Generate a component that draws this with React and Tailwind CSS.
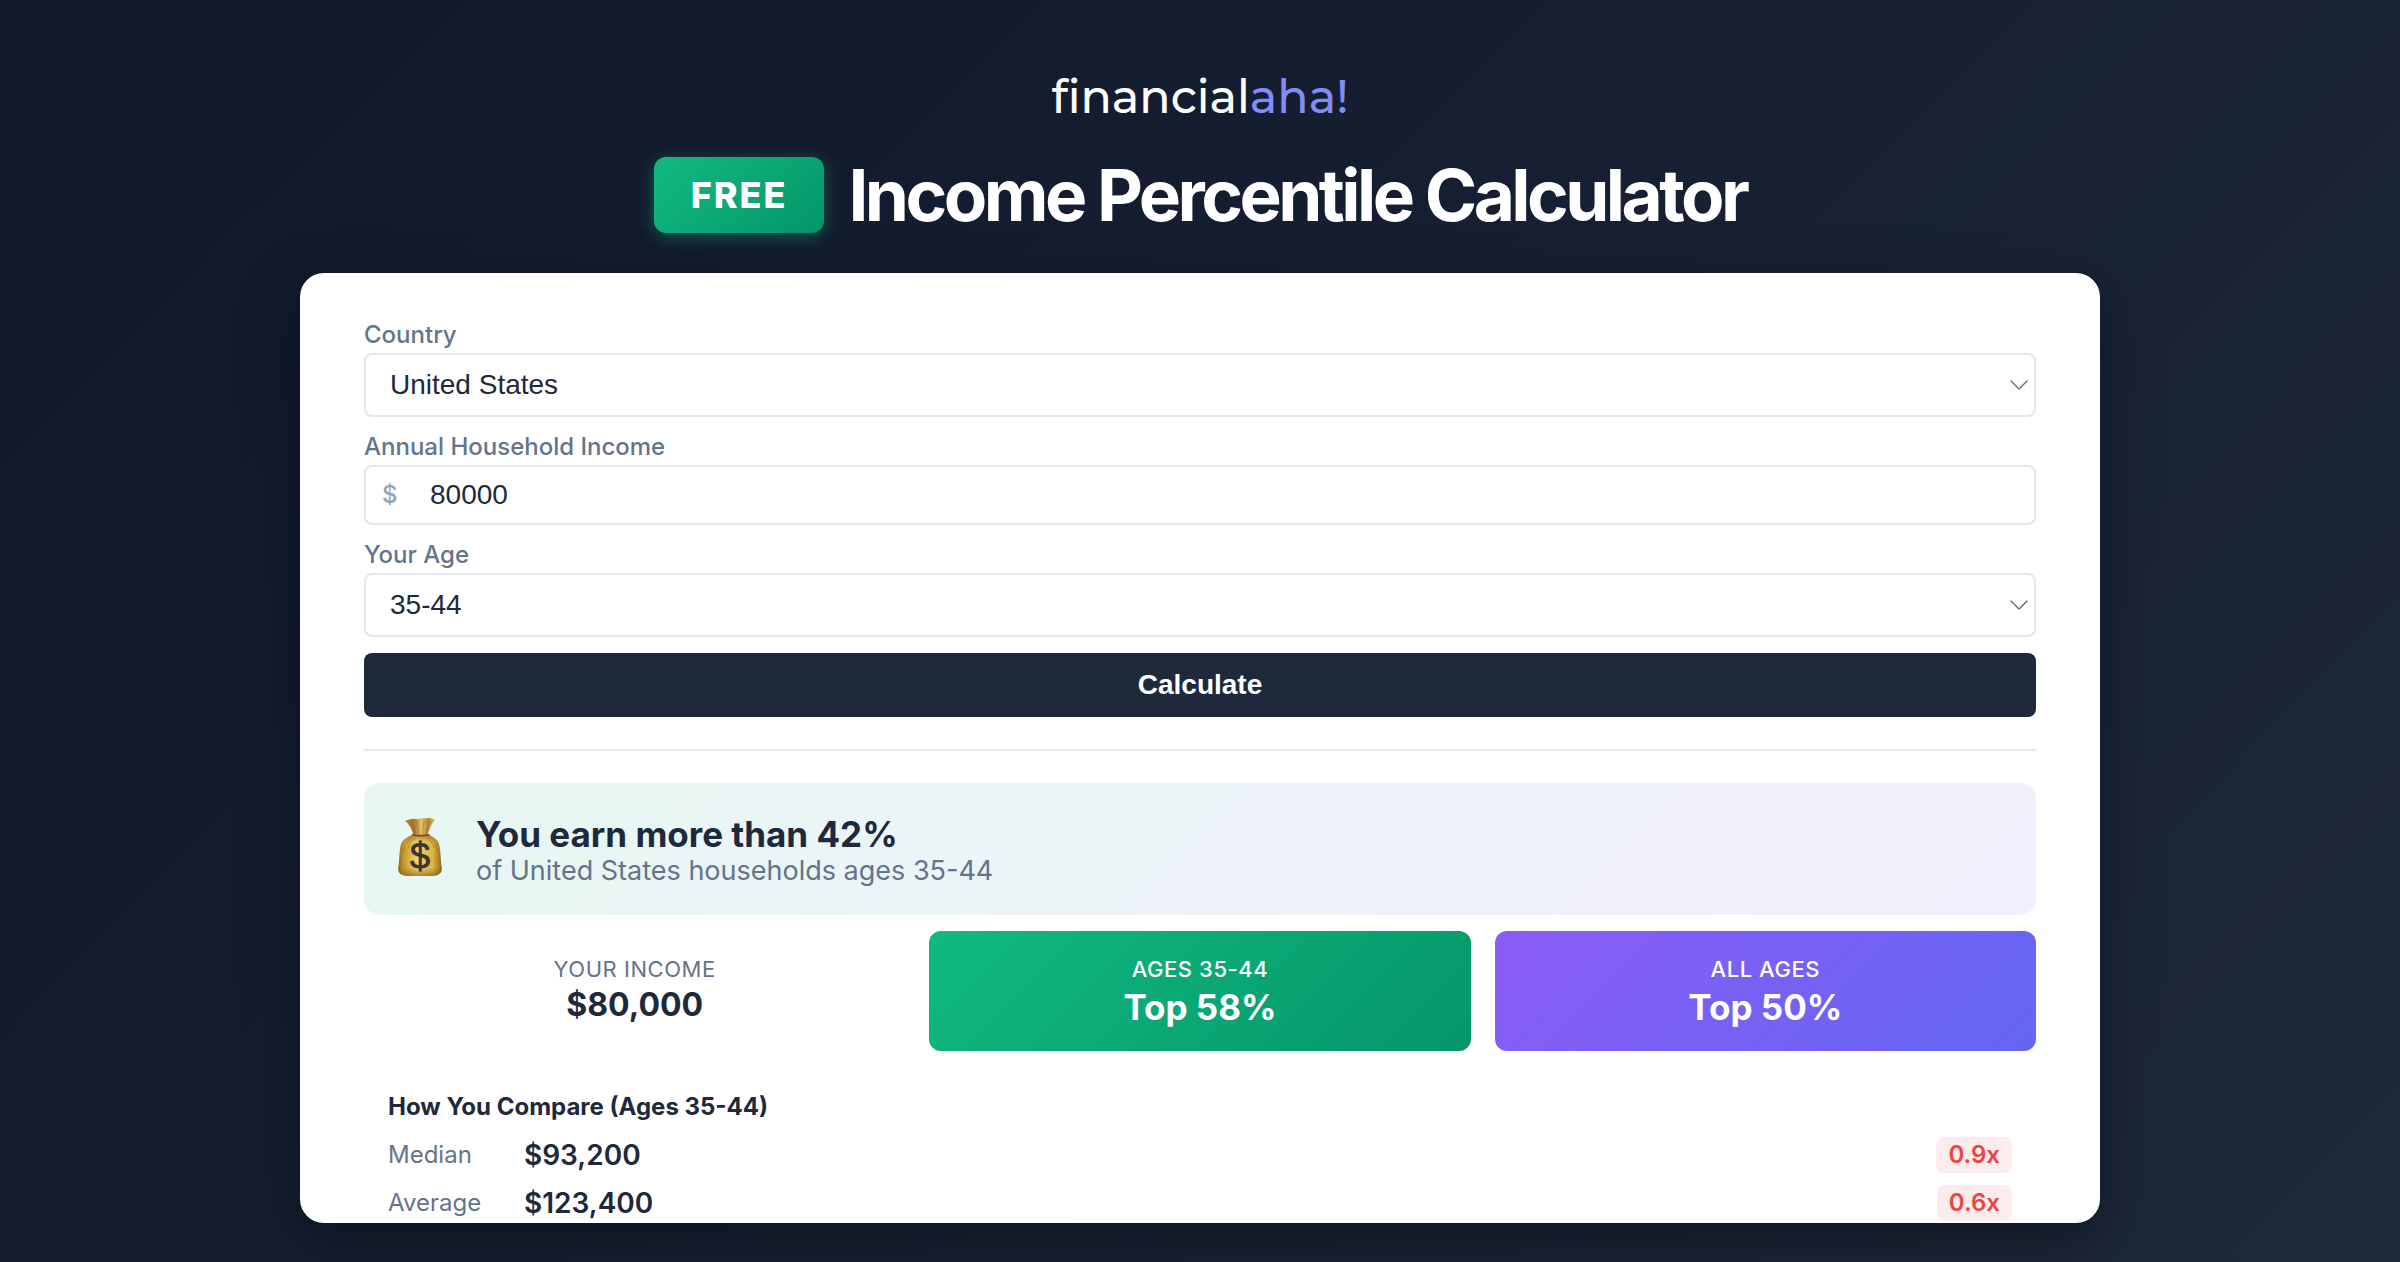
import React, { useState } from "react";
import { ChevronDown } from "lucide-react";

const incomeStats = {
  "25-34": { median: 80240, average: 103500, percentile: 50 },
  "35-44": { median: 93200, average: 123400, percentile: 42 },
  "45-54": { median: 97090, average: 134100, percentile: 41 },
};

const formatMoney = (value) => `$${Number(value).toLocaleString("en-US")}`;

const MoneyBag = () => (
  <svg viewBox="0 0 48 64" className="w-12 h-16 shrink-0" aria-hidden="true">
    <defs>
      <linearGradient id="sack" x1="0" y1="0" x2="1" y2="0">
        <stop offset="0" stopColor="#8f6a1c" />
        <stop offset="0.14" stopColor="#c79c30" />
        <stop offset="0.45" stopColor="#f0d86e" />
        <stop offset="0.8" stopColor="#d9b441" />
        <stop offset="1" stopColor="#8f6820" />
      </linearGradient>
      <linearGradient id="neck" x1="0" y1="0" x2="1" y2="0">
        <stop offset="0" stopColor="#b58434" />
        <stop offset="0.3" stopColor="#a8742a" />
        <stop offset="0.55" stopColor="#e6c26c" />
        <stop offset="0.75" stopColor="#b98534" />
        <stop offset="1" stopColor="#dcb869" />
      </linearGradient>
      <linearGradient id="shade" x1="0" y1="0" x2="0" y2="1">
        <stop offset="0" stopColor="#7a4e17" stopOpacity="0.55" />
        <stop offset="0.2" stopColor="#7a4e17" stopOpacity="0" />
        <stop offset="0.8" stopColor="#7a4e17" stopOpacity="0" />
        <stop offset="1" stopColor="#7a4e17" stopOpacity="0.6" />
      </linearGradient>
    </defs>
    <path d="M9 3.5 C12 3.5 13 2 16 2 C19 1 21 3 24 1.5 C27 .5 30 2 33 .8 C35 .8 37 2.5 39 2.5 C36 7 33.5 11 31.5 18 L17.5 18 C16 12 13 7 9 3.5 Z" fill="url(#neck)" />
    <path d="M15 4 L20 17 M21 3.5 L22.5 17 M28 3 L26.5 17 M34 4 L29.5 17" stroke="#8d5d20" strokeWidth="0.8" strokeOpacity="0.6" fill="none" />
    <path d="M17 17.5 C12 20 6 22 4.5 29 C3 37 3.5 44 2.2 51 C1.5 56 6 59 12 59 L36 59 C42 59 46.5 56 45.8 51 C44.5 44 45 37 43.5 29 C42 22 37 20 32.5 17.5 Z" fill="url(#sack)" />
    <path d="M17 17.5 C12 20 6 22 4.5 29 C3 37 3.5 44 2.2 51 C1.5 56 6 59 12 59 L36 59 C42 59 46.5 56 45.8 51 C44.5 44 45 37 43.5 29 C42 22 37 20 32.5 17.5 Z" fill="url(#shade)" />
    <path d="M17 19 C12 23 8 28 7.5 36 M20 19.5 C16 23 13 26 12.5 31 M30 19.5 C34 22 37 26 38 31 M33 19.5 C38 23 41 28 41 36" stroke="#946a1f" strokeWidth="1" strokeOpacity="0.55" fill="none" />
    <path d="M16.5 17.8 C21 19 28 19 33 17.8" stroke="#7d4a1d" strokeWidth="1.6" strokeLinecap="round" fill="none" />
    <text x="24" y="52" textAnchor="middle" fontSize="36" fill="#3f3234" stroke="#3f3234" strokeWidth="0.8" className="font-['Liberation_Sans',sans-serif]">$</text>
  </svg>
);

const SelectField = ({ id, label, value, onChange, options }) => (
  <div>
    <label htmlFor={id} className="block text-2xl leading-7 font-medium text-[#64748b] mb-1">
      {label}
    </label>
    <div className="relative">
      <select
        id={id}
        value={value}
        onChange={(e) => onChange(e.target.value)}
        className="block w-full h-16 appearance-none rounded-lg border-2 border-[#e2e8f0] bg-white px-6 text-[28px] text-[#1e293b] font-['Liberation_Sans',Arial,sans-serif]"
      >
        {options.map((opt) => (
          <option key={opt} value={opt}>{opt}</option>
        ))}
      </select>
      <ChevronDown size={32} strokeWidth={1} className="pointer-events-none absolute right-px top-4 text-[#6b6b76]" />
    </div>
  </div>
);

const CompareRow = ({ label, amount, income }) => {
  const ratio = income / amount;
  return (
    <tr className="h-12">
      <th scope="row" className="w-34 p-0 text-left text-2xl font-normal text-[#64748b]">{label}</th>
      <td className="p-0 text-[28px] leading-9 font-semibold">{formatMoney(amount)}</td>
      <td className="p-0 text-right">
        <span className={`inline-block rounded-lg px-3 text-2xl leading-9 font-semibold align-middle ${ratio < 1 ? "bg-[#ef4444]/10 text-[#ef4444]" : "bg-[#10b981]/10 text-[#10b981]"}`}>
          {ratio.toFixed(1)}x
        </span>
      </td>
    </tr>
  );
};

const App = () => {
  const [country, setCountry] = useState("United States");
  const [income, setIncome] = useState("80000");
  const [age, setAge] = useState("35-44");

  const stats = incomeStats[age];

  return (
    <div className="flex h-screen flex-col bg-linear-[135deg,#0f172a,#1e293b] px-10 pt-16 pb-[39px] text-[#1e293b] font-['Inter',sans-serif]">
      <header className="flex flex-col items-center mb-10">
        <div className="text-[46px] leading-[65px] font-medium text-white mb-7 font-['Montserrat','DejaVu_Sans',sans-serif]">
          financial<span className="text-[#818cf8]">aha!</span>
        </div>
        <div className="flex items-center gap-6">
          <span className="rounded-xl bg-linear-[135deg,#10b981,#059669] px-[37px] text-[36px] leading-[76px] font-extrabold tracking-[2px] text-white shadow-[0_4px_16px_rgba(16,185,129,0.4)]">
            FREE
          </span>
          <h1 className="text-[71px] leading-[76px] font-bold tracking-tighter text-white">
            Income Percentile Calculator
          </h1>
        </div>
      </header>

      <main className="mx-auto min-h-0 w-full max-w-[1800px] flex-1 overflow-hidden rounded-3xl bg-white px-16 pt-12 shadow-[0_20px_60px_rgba(0,0,0,0.4)]">
        <form className="flex flex-col gap-4" onSubmit={(e) => e.preventDefault()}>
          <SelectField
            id="country"
            label="Country"
            value={country}
            onChange={setCountry}
            options={["United States", "Canada", "United Kingdom"]}
          />
          <div>
            <label htmlFor="income" className="block text-2xl leading-7 font-medium text-[#64748b] mb-1">
              Annual Household Income
            </label>
            <div className="relative">
              <span className="absolute left-[18px] top-0 text-2xl leading-[60px] font-medium text-[#94a3b8]">$</span>
              <input
                id="income"
                type="text"
                inputMode="numeric"
                value={income}
                onChange={(e) => setIncome(e.target.value)}
                className="block w-full h-15 rounded-lg border-2 border-[#e2e8f0] pl-16 pr-6 text-[28px] font-['Liberation_Sans',Arial,sans-serif]"
              />
            </div>
          </div>
          <SelectField
            id="age"
            label="Your Age"
            value={age}
            onChange={setAge}
            options={Object.keys(incomeStats)}
          />
          <button type="submit" className="h-16 w-full rounded-lg bg-[#1e293b] text-[28px] font-bold text-white font-['Liberation_Sans',Arial,sans-serif]">
            Calculate
          </button>
        </form>

        <hr className="my-8 border-t-2 border-[#e2e8f0]" />

        <section className="flex h-33 items-center gap-8 rounded-2xl bg-linear-[135deg,rgba(16,185,129,0.1),rgba(139,92,246,0.1)] px-8">
          <MoneyBag />
          <div>
            <h2 className="text-[35px] leading-[44px] font-bold">You earn more than {stats.percentile}%</h2>
            <p className="text-[27px] leading-[30px] text-[#64748b]">of {country} households ages {age}</p>
          </div>
        </section>

        <section className="mt-4 grid grid-cols-3 gap-6 text-center">
          <div className="pt-6 pb-5">
            <div className="text-[22px] leading-7 tracking-wide text-[#64748b]">YOUR INCOME</div>
            <div className="text-[32px] leading-[44px] font-bold">{formatMoney(income)}</div>
          </div>
          <div className="rounded-xl bg-linear-[135deg,#10b981,#059669] pt-6 pb-5 text-white">
            <div className="text-[22px] leading-7 font-medium tracking-wide">AGES {age}</div>
            <div className="text-[35px] leading-[48px] font-bold">Top {100 - stats.percentile}%</div>
          </div>
          <div className="rounded-xl bg-linear-[135deg,#8b5cf6,#6366f1] pt-6 pb-5 text-white">
            <div className="text-[22px] leading-7 font-medium tracking-wide">ALL AGES</div>
            <div className="text-[35px] leading-[48px] font-bold">Top 50%</div>
          </div>
        </section>

        <section className="mt-4 px-6 pt-6">
          <h3 className="mb-2 text-2xl leading-8 font-bold">How You Compare (Ages {age})</h3>
          <table className="w-full border-collapse">
            <tbody>
              <CompareRow label="Median" amount={stats.median} income={income} />
              <CompareRow label="Average" amount={stats.average} income={income} />
            </tbody>
          </table>
        </section>
      </main>
    </div>
  );
};

export default App;
